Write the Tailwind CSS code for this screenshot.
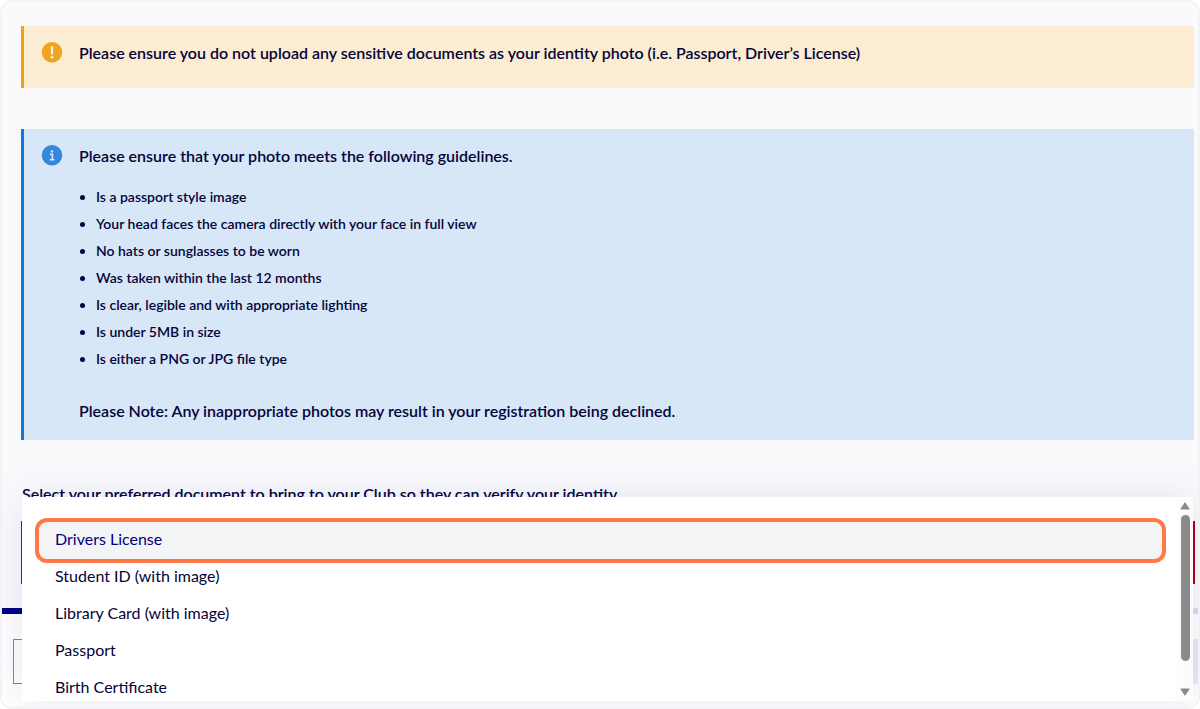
<!DOCTYPE html>
<html lang="en">
<head>
  <meta charset="UTF-8" />
  <meta name="viewport" content="width=device-width, initial-scale=1.0" />
  <title>Identity Verification</title>
  <script src="https://cdn.jsdelivr.net/npm/@tailwindcss/browser@4"></script>
  <style>
    body { font-family: 'Lato', 'Open Sans', sans-serif; }
  </style>
</head>
<body class="bg-white text-[#04043a] min-h-screen flex flex-col">
  <main class="grow flex flex-col border-2 border-[#f3f3f6] rounded-xl overflow-hidden">

    <!-- Form -->
    <form id="identity-form" class="bg-[#fafafd] pl-[19px] pr-1 pt-6 pb-6">
      <!-- Warning -->
      <div role="alert" class="flex gap-[15px] items-start border-l-3 border-[#f0a30a] bg-[#fbecd2] pl-4 pt-4 pb-6">
        <svg class="w-6 h-5 shrink-0 overflow-visible" viewBox="0 0 24 20" aria-hidden="true">
          <circle cx="12" cy="10.2" r="10.3" fill="#eea41f" />
          <path d="M12 5v6.6" stroke="#fdf1dc" stroke-width="2.2" stroke-linecap="round" />
          <circle cx="12" cy="15.2" r="1.4" fill="#fdf1dc" />
        </svg>
        <p class="text-base leading-[22px] font-semibold">Please ensure you do not upload any sensitive documents as your identity photo (i.e. Passport, Driver’s License)</p>
      </div>

      <!-- Photo guidelines -->
      <div class="flex gap-[15px] items-start mt-[41px] border-l-3 border-[#1379d8] bg-[#d7e7f7] pl-4 pt-4 pb-[18px]">
        <svg class="w-6 h-5 shrink-0 overflow-visible" viewBox="0 0 24 20" aria-hidden="true">
          <circle cx="12" cy="10.2" r="10.3" fill="#3488dc" />
          <circle cx="12" cy="6.4" r="1.2" fill="#d7e7f7" />
          <path d="M10 9.4h2.4v5M9.8 14.8h4.6" fill="none" stroke="#d7e7f7" stroke-width="1.6" />
        </svg>
        <div class="font-semibold">
          <p class="text-base leading-[22px]">Please ensure that your photo meets the following guidelines.</p>
          <ul class="mt-4 pl-[17px] list-disc text-sm leading-[27px]">
            <li>Is a passport style image</li>
            <li>Your head faces the camera directly with your face in full view</li>
            <li>No hats or sunglasses to be worn</li>
            <li>Was taken within the last 12 months</li>
            <li>Is clear, legible and with appropriate lighting</li>
            <li>Is under 5MB in size</li>
            <li>Is either a PNG or JPG file type</li>
          </ul>
          <p class="mt-7 text-base leading-[22px]">Please Note: Any inappropriate photos may result in your registration being declined.</p>
        </div>
      </div>

      <!-- Document picker -->
      <label for="document" class="block mt-[43px] pl-px text-base leading-[22px] font-semibold">Select your preferred document to bring to your Club so they can verify your identity</label>
      <div class="relative mt-4 -mr-px">
        <select id="document" class="block w-full h-[63px] appearance-none border-2 border-[#b00012] bg-white px-8">
          <option>Drivers License</option>
          <option>Student ID (with image)</option>
          <option>Library Card (with image)</option>
          <option>Passport</option>
          <option>Birth Certificate</option>
        </select>

        <!-- Open menu -->
        <div class="absolute z-10 -top-6 left-px right-0.5 h-[204px] flex overflow-hidden bg-white shadow-[0_0_40px_rgba(0,0,128,0.1)]">
          <ul role="listbox" class="grow pt-[21px] pl-[13px] pr-[11px] text-base">
            <li role="option" aria-selected="true" class="h-[45px] px-4 pb-1 flex items-center rounded-xl border-4 border-[#ff7845] bg-[#f3f4f6] text-[#000080]">Drivers License</li>
            <li role="option" class="-mt-1 px-5 pb-1 h-[37px] flex items-center">Student ID (with image)</li>
            <li role="option" class="px-5 pb-1 h-[37px] flex items-center">Library Card (with image)</li>
            <li role="option" class="px-5 pb-1 h-[37px] flex items-center">Passport</li>
            <li role="option" class="px-5 pb-1 h-[37px] flex items-center">Birth Certificate</li>
          </ul>
          <!-- Scrollbar -->
          <div class="w-4 shrink-0 bg-[#fcfcfc] flex flex-col items-center pt-1 pb-1">
            <svg class="w-[10px] h-[10px]" viewBox="0 0 10 10" aria-hidden="true"><path d="M5 1.8 9.2 8H.8z" fill="#8b8b8b" stroke="#8b8b8b" stroke-linejoin="round" /></svg>
            <div class="w-[9px] h-[146px] mt-1 rounded-full bg-[#8b8b8b]"></div>
            <svg class="w-[10px] h-[10px] mt-auto" viewBox="0 0 10 10" aria-hidden="true"><path d="M5 8.2 9.2 2H.8z" fill="#8b8b8b" stroke="#8b8b8b" stroke-linejoin="round" /></svg>
          </div>
        </div>
      </div>
    </form>

    <!-- Footer -->
    <footer class="grow bg-white">
      <div class="h-[6px] bg-[#dcdce9]">
        <div class="h-full bg-[#000080]" style="width: 50%"></div>
      </div>
      <div class="flex justify-between pt-[25px] pl-[11px]">
        <button type="button" aria-label="Back" class="w-40 h-[45px] border border-[#000080]/50 bg-white"></button>
        <button type="submit" form="identity-form" aria-label="Next" disabled class="w-40 h-[45px] bg-[#ebebf1]"></button>
      </div>
    </footer>
  </main>
</body>
</html>
